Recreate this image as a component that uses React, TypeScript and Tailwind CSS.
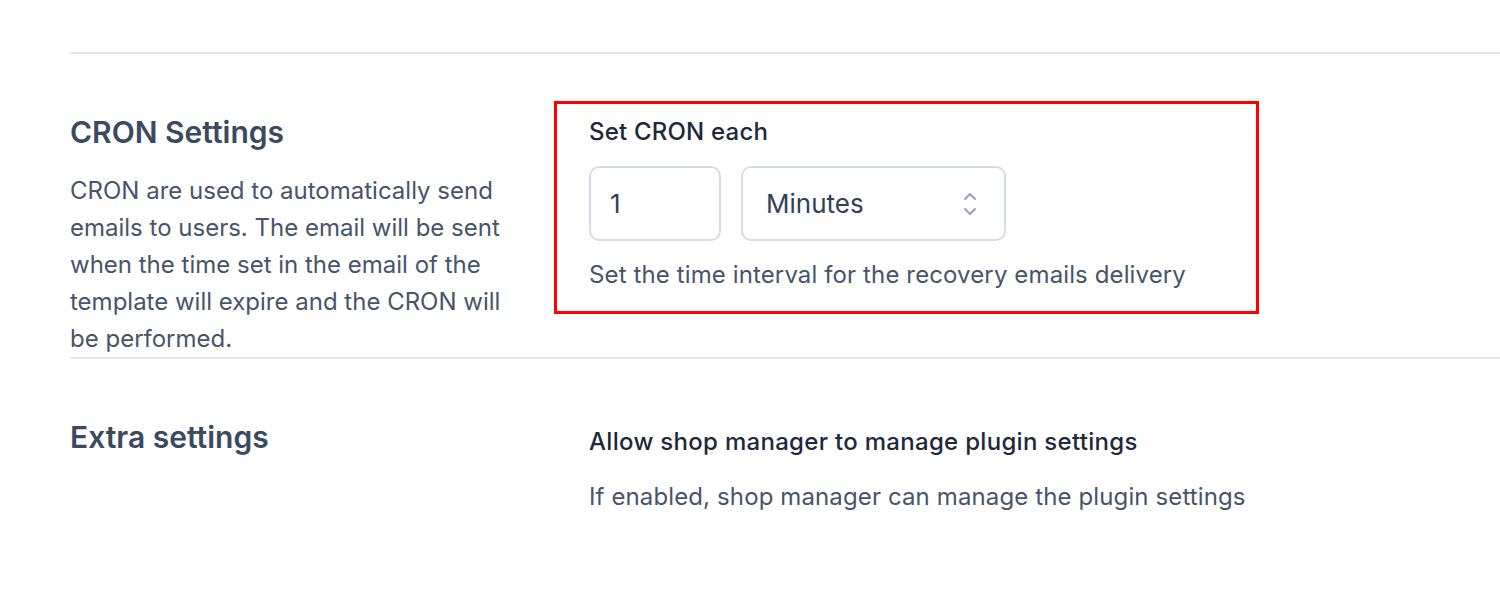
import React from "react";

const ChevronUpDown = () => (
    <svg width="16" height="26" viewBox="0 0 16 26" fill="none" stroke="#94a3b8" strokeWidth="2" strokeLinecap="round" strokeLinejoin="round">
        <path d="M3 8l5-5 5 5" />
        <path d="M3 18l5 5 5-5" />
    </svg>
);

export default function App() {
    return (
        <div className="w-[1500px] h-[603px] bg-white overflow-hidden" style={{ fontFamily: "Inter, 'Noto Sans', sans-serif" }}>
            <div className="pt-[52px] pl-[70px]">
                <div className="border-t-2 border-[#e6e8eb]" />

                {/* CRON section */}
                <div className="flex pt-[47px]">
                    <div className="w-[484px] shrink-0 pt-[13px]">
                        <h2 className="text-[30px] leading-[36px] font-semibold text-[#3b4a5f]">CRON Settings</h2>
                        <p className="mt-[22px] w-[446px] text-[24px] leading-[37px] text-[#475569]">
                            CRON are used to automatically send emails to users. The email will be sent when the time set in the email of the template will expire and the CRON will be performed.
                        </p>
                    </div>
                    <div className="w-[705px] h-[213px] border-[3px] border-[#ff0000] pl-[32px] pt-[14px]">
                        <label className="block text-[24px] leading-[28px] font-medium tracking-[0.2px] text-[#1e293b]">Set CRON each</label>
                        <div className="mt-[20px] flex gap-[20px]">
                            <div className="w-[132px] h-[75px] rounded-[10px] border-2 border-[#d5dde8] flex items-center px-[19px] text-[26px] text-[#334155]">
                                1
                            </div>
                            <div className="w-[265px] h-[75px] rounded-[10px] border-2 border-[#d5dde8] flex items-center justify-between pl-[23px] pr-[26px] text-[26px] text-[#334155]">
                                <span>Minutes</span>
                                <ChevronUpDown />
                            </div>
                        </div>
                        <p className="mt-[20px] text-[24px] leading-[28px] tracking-[0.12px] text-[#475569]">
                            Set the time interval for the recovery emails delivery
                        </p>
                    </div>
                </div>

                <div className="border-t-2 border-[#e6e8eb]" />

                {/* Extra section */}
                <div className="flex pt-[60px]">
                    <div className="w-[519px] shrink-0">
                        <h2 className="text-[30px] leading-[36px] font-semibold text-[#3b4a5f]">Extra settings</h2>
                    </div>
                    <div className="pt-[9px]">
                        <div className="text-[24px] leading-[28px] font-medium tracking-[0.3px] text-[#1e293b]">
                            Allow shop manager to manage plugin settings
                        </div>
                        <p className="mt-[27px] text-[24px] leading-[28px] tracking-[0.12px] text-[#475569]">
                            If enabled, shop manager can manage the plugin settings
                        </p>
                    </div>
                </div>
            </div>
        </div>
    );
}
